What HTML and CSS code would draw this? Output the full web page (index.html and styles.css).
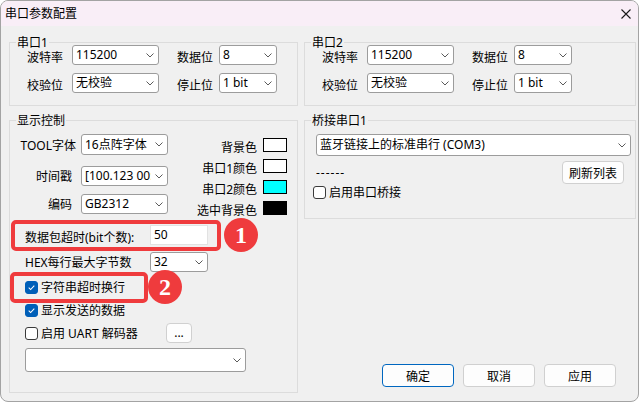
FILE: index.html
```html
<!DOCTYPE html>
<html lang="zh-CN">
    <head>
        <meta charset="UTF-8">
        <title>串口参数配置</title>
        <link rel="stylesheet" href="styles.css">
    </head>
    <body>
        <div class="window">
            <div class="titlebar">
                <span class="title">串口参数配置</span>
                <svg class="close" viewBox="0 0 10 10"><path d="M0.5 0.5 L9.5 9.5 M9.5 0.5 L0.5 9.5" stroke="#1a1a1a" stroke-width="1.1" fill="none"/></svg>
            </div>
            <div class="body">
                <div class="row">
                    <fieldset class="group port">
                        <legend>串口1</legend>
                        <div class="port-grid">
                            <span class="lbl">波特率</span>
                            <div class="combo"><span class="val">115200</span><svg class="chev" viewBox="0 0 8 5"><path d="M0.5 0.5 L4 4 L7.5 0.5" stroke="#5a5a5a" fill="none"/></svg></div>
                            <span class="lbl mid">数据位</span>
                            <div class="combo"><span class="val">8</span><svg class="chev" viewBox="0 0 8 5"><path d="M0.5 0.5 L4 4 L7.5 0.5" stroke="#5a5a5a" fill="none"/></svg></div>
                            <span class="lbl">校验位</span>
                            <div class="combo"><span class="val">无校验</span><svg class="chev" viewBox="0 0 8 5"><path d="M0.5 0.5 L4 4 L7.5 0.5" stroke="#5a5a5a" fill="none"/></svg></div>
                            <span class="lbl mid">停止位</span>
                            <div class="combo"><span class="val">1 bit</span><svg class="chev" viewBox="0 0 8 5"><path d="M0.5 0.5 L4 4 L7.5 0.5" stroke="#5a5a5a" fill="none"/></svg></div>
                        </div>
                    </fieldset>
                    <fieldset class="group port port2">
                        <legend>串口2</legend>
                        <div class="port-grid">
                            <span class="lbl">波特率</span>
                            <div class="combo"><span class="val">115200</span><svg class="chev" viewBox="0 0 8 5"><path d="M0.5 0.5 L4 4 L7.5 0.5" stroke="#5a5a5a" fill="none"/></svg></div>
                            <span class="lbl mid">数据位</span>
                            <div class="combo"><span class="val">8</span><svg class="chev" viewBox="0 0 8 5"><path d="M0.5 0.5 L4 4 L7.5 0.5" stroke="#5a5a5a" fill="none"/></svg></div>
                            <span class="lbl">校验位</span>
                            <div class="combo"><span class="val">无校验</span><svg class="chev" viewBox="0 0 8 5"><path d="M0.5 0.5 L4 4 L7.5 0.5" stroke="#5a5a5a" fill="none"/></svg></div>
                            <span class="lbl mid">停止位</span>
                            <div class="combo"><span class="val">1 bit</span><svg class="chev" viewBox="0 0 8 5"><path d="M0.5 0.5 L4 4 L7.5 0.5" stroke="#5a5a5a" fill="none"/></svg></div>
                        </div>
                    </fieldset>
                </div>

                <div class="row bottom-row">
                    <fieldset class="group display">
                        <legend>显示控制</legend>
                        <div class="disp-top">
                            <div class="disp-left">
                                <div class="drow first">
                                    <span class="dlbl tight">TOOL字体</span>
                                    <div class="combo tall"><span class="val">16点阵字体</span><svg class="chev" viewBox="0 0 8 5"><path d="M0.5 0.5 L4 4 L7.5 0.5" stroke="#5a5a5a" fill="none"/></svg></div>
                                </div>
                                <div class="drow">
                                    <span class="dlbl">时间戳</span>
                                    <div class="combo"><span class="val">[100.123 00:00:00]</span><svg class="chev" viewBox="0 0 8 5"><path d="M0.5 0.5 L4 4 L7.5 0.5" stroke="#5a5a5a" fill="none"/></svg></div>
                                </div>
                                <div class="drow">
                                    <span class="dlbl">编码</span>
                                    <div class="combo"><span class="val">GB2312</span><svg class="chev" viewBox="0 0 8 5"><path d="M0.5 0.5 L4 4 L7.5 0.5" stroke="#5a5a5a" fill="none"/></svg></div>
                                </div>
                            </div>
                            <div class="colors">
                                <span class="clbl">背景色</span><span class="swatch"></span>
                                <span class="clbl">串口1颜色</span><span class="swatch"></span>
                                <span class="clbl">串口2颜色</span><span class="swatch cyan"></span>
                                <span class="clbl">选中背景色</span><span class="swatch black"></span>
                            </div>
                        </div>
                        <div class="prow timeout">
                            <span class="plbl">数据包超时(bit个数):</span>
                            <div class="edit">50</div>
                        </div>
                        <div class="prow hex">
                            <span class="plbl low">HEX每行最大字节数</span>
                            <div class="combo small"><span class="val">32</span><svg class="chev" viewBox="0 0 8 5"><path d="M0.5 0.5 L4 4 L7.5 0.5" stroke="#5a5a5a" fill="none"/></svg></div>
                        </div>
                        <div class="crow first">
                            <span class="cb on"><svg viewBox="0 0 13 13"><path d="M3.2 6.6 L5.5 8.9 L9.8 4.4" stroke="#fff" stroke-width="1.2" fill="none"/></svg></span>
                            <span>字符串超时换行</span>
                        </div>
                        <div class="crow">
                            <span class="cb on"><svg viewBox="0 0 13 13"><path d="M3.2 6.6 L5.5 8.9 L9.8 4.4" stroke="#fff" stroke-width="1.2" fill="none"/></svg></span>
                            <span>显示发送的数据</span>
                        </div>
                        <div class="crow">
                            <span class="cb"></span>
                            <span class="uart">启用 UART 解码器</span>
                            <div class="btn dots">...</div>
                        </div>
                        <div class="combo wide"><span class="val"></span><svg class="chev" viewBox="0 0 8 5"><path d="M0.5 0.5 L4 4 L7.5 0.5" stroke="#5a5a5a" fill="none"/></svg></div>
                    </fieldset>

                    <div class="right">
                        <fieldset class="group bridge">
                            <legend>桥接串口1</legend>
                            <div class="combo port-sel"><span class="val">蓝牙链接上的标准串行 (COM3)</span><svg class="chev" viewBox="0 0 8 5"><path d="M0.5 0.5 L4 4 L7.5 0.5" stroke="#5a5a5a" fill="none"/></svg></div>
                            <div class="bridge-mid">
                                <span class="dash">------</span>
                                <div class="btn refresh">刷新列表</div>
                            </div>
                            <div class="bridge-chk">
                                <span class="cb"></span>
                                <span>启用串口桥接</span>
                            </div>
                        </fieldset>
                        <div class="actions">
                            <div class="btn default">确定</div>
                            <div class="btn">取消</div>
                            <div class="btn">应用</div>
                        </div>
                    </div>
                </div>
            </div>

            <!-- annotation marks drawn over the dialog -->
            <div class="mark mark1"></div>
            <div class="num num1">1</div>
            <div class="mark mark2"></div>
            <div class="num num2">2</div>
        </div>
    </body>
</html>
```

FILE: styles.css
```css
*{
    box-sizing: border-box;
}
body{
    margin: 0;
    background: #fff;
    font-family: "Noto Sans", "Noto Sans CJK SC", sans-serif;
    font-size: 12px;
    color: #000;
}
.window{
    position: relative;
    width: 639px;
    height: 402px;
    border: 1px solid #a3a3a3;
    border-radius: 8px;
    background: #f0f0f0;
    overflow: hidden;
    display: flex;
    flex-direction: column;
}
.titlebar{
    height: 25px;
    flex: none;
    display: flex;
    align-items: center;
    justify-content: space-between;
    padding: 0 7px 0 4px;
    background: #f9eef7;
}
.title{
    line-height: 16px;
}
.close{
    width: 10px;
    height: 10px;
}
.body{
    padding: 14px 0 0 8px;
}
.row{
    display: flex;
    gap: 6px;
}
.bottom-row{
    margin-top: 12px;
}

/* group boxes */
fieldset.group{
    margin: 0;
    padding: 0;
    min-width: 0;
    border: 1px solid #dcdcdc;
}
fieldset.group legend{
    margin-left: 6px;
    padding: 0 1px;
    line-height: 5px;
    white-space: nowrap;
}
.port{
    width: 289px;
}
.port2{
    width: 332px;
}
.port-grid{
    display: grid;
    grid-template-columns: 62px 87px 60px 58px;
    grid-auto-rows: 20px;
    row-gap: 8px;
    padding-bottom: 12px;
}
.lbl{
    align-self: end;
    line-height: 14px;
    text-align: right;
    padding-right: 9px;
    white-space: nowrap;
}
.lbl.mid{
    padding-right: 6px;
}

/* combo boxes */
.combo{
    display: flex;
    align-items: center;
    height: 20px;
    padding: 0 4px 0 3px;
    background: #fff;
    border: 1px solid #9c9c9c;
    border-radius: 3px;
}
.combo .val{
    flex: 1;
    min-width: 0;
    overflow: hidden;
    white-space: nowrap;
    line-height: 16px;
}
.combo .chev{
    flex: none;
    width: 8px;
    height: 5px;
    margin-left: 4px;
}
.combo.tall{
    height: 21px;
}

/* display control */
.display{
    width: 289px;
    height: 275px;
}
.disp-top{
    display: flex;
    justify-content: space-between;
    align-items: flex-start;
    padding-top: 11px;
}
.disp-left{
    display: flex;
    flex-direction: column;
    gap: 8px;
}
.drow{
    display: flex;
    align-items: flex-end;
}
.drow.first{
    margin-bottom: 3px;
}
.drow .combo{
    width: 87px;
}
.dlbl{
    width: 71px;
    text-align: right;
    padding-right: 9px;
    line-height: 14px;
    margin-bottom: 2px;
    white-space: nowrap;
}
.dlbl.tight{
    padding-right: 5px;
}
.colors{
    display: grid;
    grid-template-columns: auto 24px;
    grid-auto-rows: 14px;
    column-gap: 6px;
    row-gap: 7px;
    margin: 4px 10px 0 0;
}
.clbl{
    text-align: right;
    line-height: 14px;
    margin: 3px 0 -3px;
    white-space: nowrap;
}
.swatch{
    border: 1px solid #000;
    background: #fff;
}
.swatch.cyan{
    background: #00ffff;
}
.swatch.black{
    background: #000;
}
.prow{
    display: flex;
    align-items: flex-end;
    padding-left: 15px;
    margin-top: 7px;
}
.prow.timeout{
    margin-top: 10px;
}
.plbl{
    width: 125px;
    line-height: 14px;
    white-space: nowrap;
}
.plbl.low{
    margin-bottom: 2px;
}
.edit{
    width: 58px;
    height: 20px;
    padding-left: 3px;
    line-height: 18px;
    background: #fff;
    border: 1px solid #e2e2e2;
}
.combo.small{
    width: 58px;
}
.crow{
    display: flex;
    align-items: center;
    height: 20px;
    padding-left: 15px;
    margin-top: 3px;
    white-space: nowrap;
}
.crow.first{
    margin-top: 5px;
}
.cb{
    flex: none;
    width: 13px;
    height: 13px;
    margin-right: 3px;
    border: 1px solid #3a3a3a;
    border-radius: 3px;
    background: #fff;
}
.cb.on{
    background: #005fb8;
    border-color: #005fb8;
}
.cb svg{
    display: block;
    width: 11px;
    height: 11px;
}
.uart{
    width: 125px;
}
.btn{
    display: flex;
    align-items: center;
    justify-content: center;
    height: 23px;
    background: #fdfdfd;
    border: 1px solid #d0d0d0;
    border-radius: 4px;
}
.btn.dots{
    width: 26px;
    height: 20px;
    line-height: 14px;
}
.combo.wide{
    width: 221px;
    height: 24px;
    margin: 5px 0 0 15px;
}

/* bridge */
.right{
    width: 332px;
    display: flex;
    flex-direction: column;
}
.bridge{
    height: 101px;
}
.combo.port-sel{
    height: 22px;
    margin: 11px 4px 0 11px;
}
.bridge-mid{
    display: flex;
    justify-content: space-between;
    align-items: center;
    margin-top: 5px;
    padding: 0 11px;
}
.dash{
    letter-spacing: 1px;
}
.btn.refresh{
    width: 62px;
}
.bridge-chk{
    display: flex;
    align-items: center;
    height: 14px;
    margin-top: 1px;
    padding-left: 8px;
}
.actions{
    margin-top: auto;
    margin-bottom: 6px;
    padding-right: 20px;
    display: flex;
    justify-content: flex-end;
    gap: 9px;
}
.actions .btn{
    width: 72px;
}
.btn.default{
    border-color: #0067c0;
}

/* red annotation marks */
.mark{
    position: absolute;
    border: 4px solid #ef3b3d;
    border-radius: 5px;
}
.mark1{
    left: 10px;
    top: 219px;
    width: 210px;
    height: 31px;
}
.mark2{
    left: 9px;
    top: 271px;
    width: 138px;
    height: 31px;
}
.num{
    position: absolute;
    width: 34px;
    height: 34px;
    border-radius: 50%;
    background: #ef3b3d;
    color: #fff;
    font-family: "Liberation Serif", serif;
    font-size: 24px;
    font-weight: bold;
    display: flex;
    align-items: center;
    justify-content: center;
}
.num1{
    left: 223px;
    top: 217px;
}
.num2{
    left: 147px;
    top: 269px;
}
```
